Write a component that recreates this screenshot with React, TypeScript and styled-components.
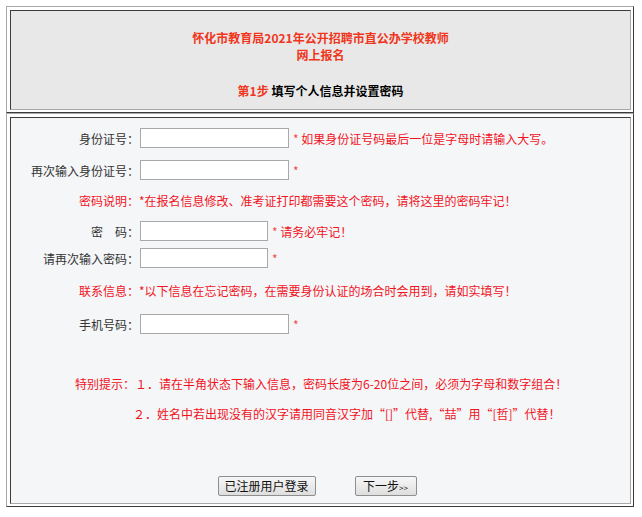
import React, { FC } from 'react';
import styled, { createGlobalStyle } from 'styled-components';

const GlobalStyle = createGlobalStyle`
  body {
    margin: 0;
    background: #fff;
    font-family: "Noto Sans CJK SC", "Noto Sans", sans-serif;
    font-size: 12px;
    color: #333;
  }
`;

const Page = styled.div`
  padding: 6px 0 0 6px;
`;

const OuterTable = styled.div`
  width: 628px;
  box-sizing: border-box;
  border: 1px solid;
  border-color: #a8a8a8 #3c3c3c #3c3c3c #a8a8a8;
  padding: 3px 2px 2px 3px;
  background: #fff;
`;

const Cell = styled.div<{ $bg: string }>`
  border: 1px solid;
  border-color: #3c3c3c #a8a8a8 #a8a8a8 #3c3c3c;
  background: ${(p) => p.$bg};
`;

const Header = styled.div`
  height: 98px;
  box-sizing: border-box;
  padding-top: 18px;
  text-align: center;
  font-weight: bold;
`;

const Title = styled.div`
  color: #f0361c;
  line-height: 17px;
`;

const Step = styled.div`
  margin-top: 19px;
  line-height: 17px;
  color: #000;
`;

const Red = styled.span`
  color: #f0361c;
`;

const Body = styled.div`
  padding: 4px 0 7px;
`;

const Row = styled.div<{ $h: number; $mt?: number }>`
  display: flex;
  align-items: center;
  height: ${(p) => p.$h}px;
  margin-top: ${(p) => p.$mt || 0}px;
`;

const Label = styled.div`
  width: 128px;
  margin-right: 1px;
  text-align: right;
  white-space: nowrap;
  color: #333;
`;

const Input = styled.input<{ $w: number }>`
  width: ${(p) => p.$w}px;
  height: 20px;
  box-sizing: border-box;
  border: 1px solid #a9a9a9;
  background: #fff;
  margin: 0;
  padding: 0 2px;
  font-size: 12px;
`;

const Star = styled.span`
  margin-left: 4px;
  color: #f34a4a;
`;

const Hint = styled.span`
  color: #f0141e;
`;

const Note = styled.div<{ $pl: number }>`
  padding-left: ${(p) => p.$pl}px;
  color: #f0141e;
  white-space: nowrap;
`;

const ButtonRow = styled.div`
  display: flex;
  justify-content: center;
  gap: 39px;
  padding-right: 7px;
  margin-top: 48px;
  height: 20px;
`;

const Button = styled.button<{ $w: number }>`
  width: ${(p) => p.$w}px;
  height: 20px;
  box-sizing: border-box;
  padding: 0;
  border: 1px solid #8e8e8e;
  border-radius: 2px;
  background: linear-gradient(#f7f7f7, #dedede);
  font-family: "Noto Sans CJK SC", "Noto Sans", sans-serif;
  font-size: 12px;
  line-height: 18px;
  color: #111;
`;

const Small = styled.span`
  font-size: 8px;
`;

type FieldProps = {
  label: string,
  width: number,
  hint?: string,
  height: number,
};

const Field: FC<FieldProps> = ({ label, width, hint, height }) => (
  <Row $h={height}>
    <Label>{label}</Label>
    <Input $w={width} />
    <Star>*</Star>
    {hint && <Hint>&nbsp;{hint}</Hint>}
  </Row>
);

const App: FC = () => (
  <Page>
    <GlobalStyle />
    <OuterTable>
      <Cell $bg="#e8e8e8">
        <Header>
          <Title>怀化市教育局2021年公开招聘市直公办学校教师</Title>
          <Title>网上报名</Title>
          <Step>
            <Red>第1步</Red> 填写个人信息并设置密码
          </Step>
        </Header>
      </Cell>
    </OuterTable>
    <OuterTable>
      <Cell $bg="#f5f6f8">
        <Body>
          <Field label="身份证号：" width={149} height={32} hint="如果身份证号码最后一位是字母时请输入大写。" />
          <Field label="再次输入身份证号：" width={149} height={32} />
          <Row $h={28}>
            <Note $pl={68}>密码说明：*在报名信息修改、准考证打印都需要这个密码，请将这里的密码牢记！</Note>
          </Row>
          <Field label="密　码：" width={128} height={34} hint="请务必牢记！" />
          <Field label="请再次输入密码：" width={128} height={20} />
          <Row $h={44}>
            <Note $pl={68}>联系信息：*以下信息在忘记密码，在需要身份认证的场合时会用到，请如实填写！</Note>
          </Row>
          <Field label="手机号码：" width={149} height={24} />
          <Row $h={30} $mt={32}>
            <Note $pl={64}>特别提示：１．请在半角状态下输入信息，密码长度为6-20位之间，必须为字母和数字组合！</Note>
          </Row>
          <Row $h={30}>
            <Note $pl={122}>２．姓名中若出现没有的汉字请用同音汉字加“[]”代替,“喆”用“[哲]”代替！</Note>
          </Row>
          <ButtonRow>
            <Button type="button" $w={98}>已注册用户登录</Button>
            <Button type="button" $w={62}>下一步<Small>&gt;&gt;</Small></Button>
          </ButtonRow>
        </Body>
      </Cell>
    </OuterTable>
  </Page>
);

export default App;
